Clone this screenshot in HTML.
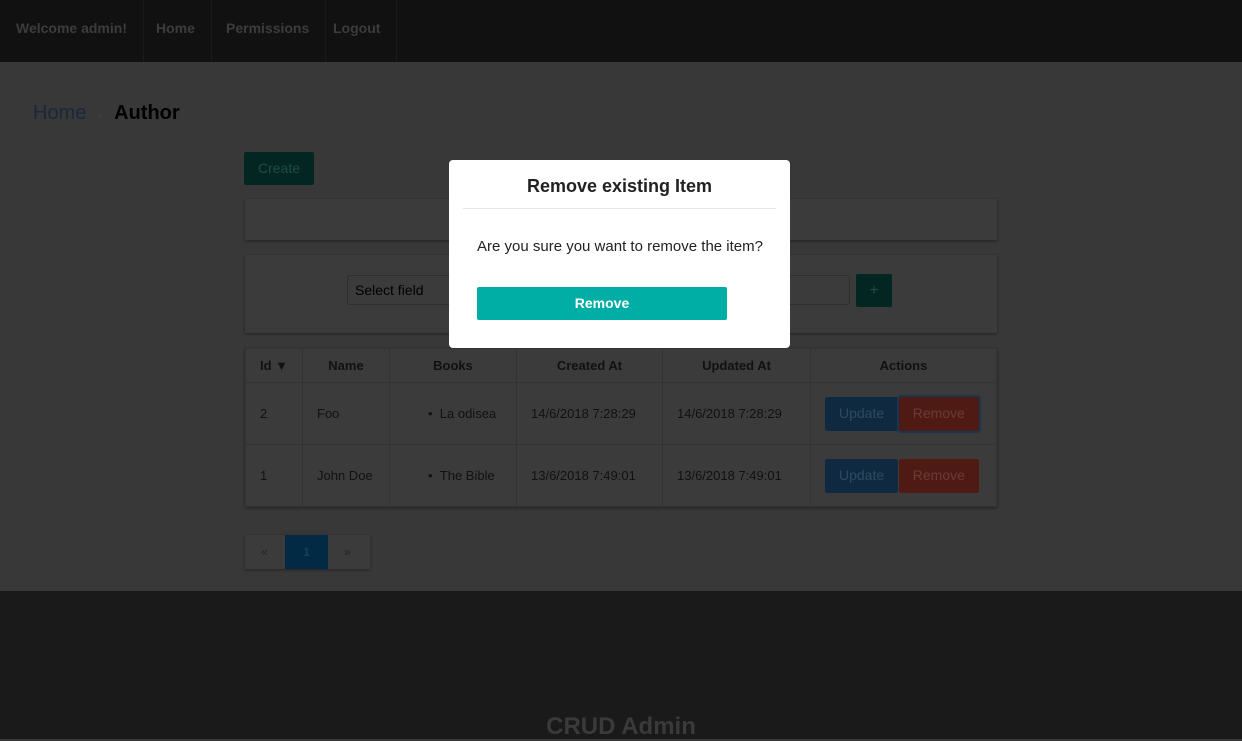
<!DOCTYPE html>
<html><head><meta charset="utf-8"><style>
*{box-sizing:border-box;margin:0;padding:0}
body{width:1242px;height:739px;overflow:hidden;background:#383838;font-family:"Liberation Sans",sans-serif;position:relative}
.a{position:absolute}
.nav{left:0;top:0;width:1242px;height:62px;background:#111}
.nav span{position:absolute;top:0;height:62px;line-height:56px;color:#3c3c3c;font-weight:bold;font-size:14px;border-right:1px solid #1a1a1a;padding:0 16px;white-space:nowrap}
.card{background:#3b3b3b;box-shadow:0 1px 3px rgba(0,0,0,.4)}
table{border-collapse:collapse;width:752px;font-size:13px;color:#111;table-layout:fixed}
td,th{border:1px solid #333;padding:0 14px;white-space:nowrap}
th{height:34px;font-weight:bold;text-align:center}
td{height:62px}
.btn{display:inline-block;height:34px;line-height:32px;font-size:14px;padding:0 14px;border-radius:2px}
.up{background:#0f2a40;color:#2c4a63}
.rm{background:#501a14;color:#6a3b36}
</style></head><body>
<div class="a nav">
<span style="left:0">Welcome admin!</span>
<span style="left:140px">Home</span>
<span style="left:210px">Permissions</span>
<span style="left:317px">Logout</span>
</div>
<div class="a" style="left:33px;top:102px;font-size:20px;color:#18283a;white-space:nowrap">Home <span style="color:#444;font-size:14px;margin:0 6px">›</span> <span style="color:#000;font-weight:bold">Author</span></div>
<div class="a" style="left:244px;top:152px;width:70px;height:33px;background:#032622;border-radius:2px;color:#1f4d47;font-size:14px;line-height:33px;text-align:center">Create</div>
<div class="a card" style="left:245px;top:199px;width:752px;height:41px"></div>
<div class="a card" style="left:245px;top:255px;width:752px;height:78px"></div>
<div class="a" style="left:347px;top:275px;width:120px;height:30px;border:1px solid #2e2e2e;border-radius:3px;color:#000;font-size:14px;line-height:28px;padding-left:7px">Select field</div>
<div class="a" style="left:780px;top:275px;width:70px;height:30px;border:1px solid #2e2e2e;border-radius:3px"></div>
<div class="a" style="left:856px;top:274px;width:36px;height:33px;background:#032622;border-radius:2px;color:#1f4d47;text-align:center;line-height:33px">+</div>
<div class="a card" style="left:245px;top:348px;width:752px">
<table>
<tr><th style="width:57px;text-align:left">Id ▼</th><th style="width:87px">Name</th><th style="width:127px">Books</th><th style="width:146px">Created At</th><th style="width:148px">Updated At</th><th>Actions</th></tr>
<tr><td>2</td><td>Foo</td><td style="padding-left:38px">•&nbsp;&nbsp;La odisea</td><td>14/6/2018 7:28:29</td><td>14/6/2018 7:28:29</td><td><span class="btn up">Update</span> <span class="btn rm" style="outline:2px solid #1a3550;margin-left:-3px">Remove</span></td></tr>
<tr><td>1</td><td>John Doe</td><td style="padding-left:38px">•&nbsp;&nbsp;The Bible</td><td>13/6/2018 7:49:01</td><td>13/6/2018 7:49:01</td><td><span class="btn up">Update</span> <span class="btn rm" style="margin-left:-3px">Remove</span></td></tr>
</table></div>
<div class="a card" style="left:245px;top:535px;width:125px;height:34px;font-size:12px;color:#222">
<span class="a" style="left:16px;top:10px">«</span>
<span class="a" style="left:40px;top:0;width:43px;height:34px;background:#032a45;color:#174060;text-align:center;line-height:34px;font-weight:bold">1</span>
<span class="a" style="left:99px;top:10px">»</span>
</div>
<div class="a" style="left:0;top:591px;width:1242px;height:148px;background:#1a1a1a"></div>
<div class="a" style="left:0;top:713px;width:1242px;text-align:center;font-size:24px;font-weight:bold;color:#3a3a3a">CRUD Admin</div>
<div class="a" style="left:449px;top:160px;width:341px;height:188px;background:#fff;border-radius:4px">
<div class="a" style="left:0;top:16px;width:341px;text-align:center;font-size:18px;font-weight:bold;color:#222">Remove existing Item</div>
<div class="a" style="left:14px;top:48px;width:313px;border-top:1px solid #e5e5e5"></div>
<div class="a" style="left:28px;top:78px;font-size:15px;color:#222;white-space:nowrap">Are you sure you want to remove the item?</div>
<div class="a" style="left:28px;top:127px;width:250px;height:33px;background:#00aea5;border-radius:2px;color:#fff;font-weight:bold;font-size:14px;text-align:center;line-height:33px">Remove</div>
</div>
</body></html>
